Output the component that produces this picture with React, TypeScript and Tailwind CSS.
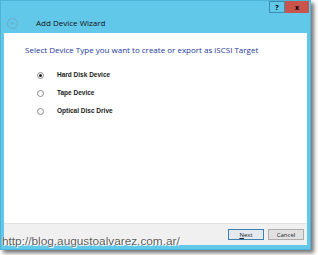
export default function App() {
  const options = [
    { label: "Hard Disk Device", checked: true },
    { label: "Tape Device", checked: false },
    { label: "Optical Disc Drive", checked: false },
  ];
  return (
    <div className="relative w-[318px] h-[255px] bg-white overflow-hidden" style={{ fontFamily: '"Segoe UI", "Open Sans", "Liberation Sans", sans-serif' }}>
      <div className="w-[311px] h-[250px] flex flex-col bg-[#62c8ea] border border-[#4fb3d8] shadow-[3px_3px_4px_rgba(0,0,0,0.55)]">
        {/* title bar */}
        <div className="h-[32px] flex flex-col">
          <div className="flex justify-end h-[12px] pr-[1px]">
            <div className="w-[16px] h-[12px] border border-[#3e8db0] bg-[#62c8ea] flex items-center justify-center text-[7px] font-bold text-black leading-none">?</div>
            <div className="w-[24px] h-[12px] bg-[#c9544c] flex items-center justify-center text-[7px] font-bold text-black leading-none">x</div>
          </div>
          <div className="flex items-center h-[20px] pl-[6px]">
            <div className="w-[11px] h-[11px] rounded-full border border-[#6fa9c4] flex items-center justify-center">
              <svg width="7" height="7" viewBox="0 0 7 7"><path d="M5 3.5H2M3.5 2L2 3.5L3.5 5" stroke="#6fa9c4" strokeWidth="0.8" fill="none" /></svg>
            </div>
            <span className="ml-[18px] text-[8px] text-[#111] leading-none">Add Device Wizard</span>
          </div>
        </div>
        {/* content */}
        <div className="flex-1 mx-[3px] flex flex-col bg-white">
          <div className="flex-1 pl-[21px] pt-[13px]">
            <div className="text-[8px] text-[#24389a] leading-none whitespace-nowrap">Select Device Type you want to create or export as iSCSI Target</div>
            <div className="mt-[17px] pl-[12px] flex flex-col gap-[9px]">
              {options.map((o) => (
                <div key={o.label} className="flex items-center h-[9px]">
                  <div className="w-[7px] h-[7px] rounded-full border border-[#8a8a8a] flex items-center justify-center bg-white">
                    {o.checked && <div className="w-[3px] h-[3px] rounded-full bg-[#222]" />}
                  </div>
                  <span className="ml-[13px] text-[6.5px] font-bold text-[#1a1a1a] leading-none" style={{ fontFamily: '"Liberation Sans", sans-serif' }}>{o.label}</span>
                </div>
              ))}
            </div>
          </div>
          <div className="h-[22px] bg-[#f0f0f0] border-t border-[#e2e2e2] flex items-center justify-end gap-[4px] pr-[3px]">
            <div className="w-[36px] h-[11px] border border-[#3c7fb1] bg-[#e3e9ef] flex items-center justify-center text-[6px] text-[#222] leading-none">
              <span><u>N</u>ext</span>
            </div>
            <div className="w-[36px] h-[11px] border border-[#adadad] bg-[#e1e1e1] flex items-center justify-center text-[6px] text-[#222] leading-none">Cancel</div>
          </div>
        </div>
        <div className="h-[4px]" />
      </div>
      <div
        className="absolute left-[2px] top-[236px] text-[11.8px] text-[#5a5a5a] leading-none whitespace-nowrap"
        style={{ fontFamily: '"Liberation Sans", Arial, sans-serif', textShadow: "0 0 1px #fff, 0 0 1px #fff, 1px 1px 0 #fff" }}
      >
        http://blog.augustoalvarez.com.ar/
      </div>
    </div>
  );
}
